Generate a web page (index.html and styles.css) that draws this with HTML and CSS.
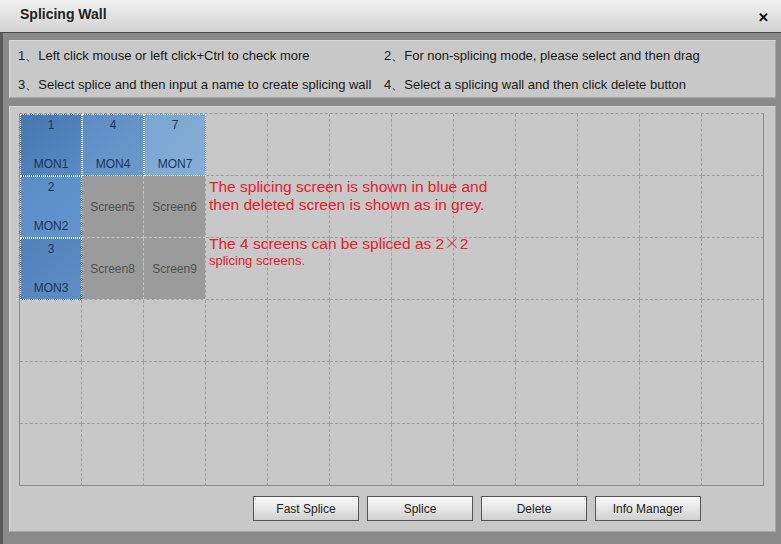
FILE: index.html
```html
<!DOCTYPE html>
<html>
<head>
  <meta charset="utf-8">
  <link rel="stylesheet" href="styles.css">
  <title>Splicing Wall</title>
</head>
<body>
  <div class="window">
    <div class="titlebar">
      <span class="title">Splicing Wall</span>
      <span class="close">&#x2715;</span>
    </div>

    <div class="content">
      <div class="tips">
        <div>1、Left click mouse or left click+Ctrl to check more</div>
        <div>2、For non-splicing mode, please select and then drag</div>
        <div>3、Select splice and then input a name to create splicing wall</div>
        <div>4、Select a splicing wall and then click delete button</div>
      </div>

      <div class="panel">
        <div class="wall" id="wall">
          <div class="note">
            <p>The splicing screen is shown in blue and<br>then deleted screen is shown as in grey.</p>
            <p>The 4 screens can be spliced as 2<span class="times">×</span>2</p>
            <p class="small">splicing screens.</p>
          </div>
        </div>

        <div class="buttons">
          <button>Fast Splice</button>
          <button>Splice</button>
          <button>Delete</button>
          <button>Info Manager</button>
        </div>
      </div>
    </div>
  </div>

  <script>
    // cells that belong to the wall, keyed by row-col
    var screens = {
      "0-0": { cls: "mon m1", num: "1", name: "MON1" },
      "0-1": { cls: "mon m4", num: "4", name: "MON4" },
      "0-2": { cls: "mon m7", num: "7", name: "MON7" },
      "1-0": { cls: "mon m2", num: "2", name: "MON2" },
      "2-0": { cls: "mon m3", num: "3", name: "MON3" },
      "1-1": { cls: "grey", name: "Screen5" },
      "1-2": { cls: "grey", name: "Screen6" },
      "2-1": { cls: "grey", name: "Screen8" },
      "2-2": { cls: "grey", name: "Screen9" }
    };

    var wall = document.getElementById("wall");
    for (var r = 0; r < 6; r++) {
      for (var c = 0; c < 12; c++) {
        var cell = document.createElement("div");
        cell.className = "cell";
        var s = screens[r + "-" + c];
        if (s) {
          cell.className += " " + s.cls;
          if (s.num) {
            cell.innerHTML = '<span class="num">' + s.num + '</span><span class="name">' + s.name + '</span>';
          } else {
            cell.innerHTML = '<span class="name">' + s.name + '</span>';
          }
        }
        wall.appendChild(cell);
      }
    }
  </script>
</body>
</html>
```

FILE: styles.css
```css
body {
  margin: 0;
  background-color: #8a8a8a;
  font-family: "Liberation Sans", Arial, sans-serif;
}

.window {
  width: 781px;
  height: 544px;
  box-sizing: border-box;
  border-left: 3px solid #5a5a5a;
  background-color: #8a8a8a;
}

.titlebar {
  height: 32px;
  margin-left: -3px;
  padding: 0 12px 0 20px;
  display: flex;
  align-items: center;
  justify-content: space-between;
  background: linear-gradient(#f2f2f2, #d2d2d2);
  border-bottom: 1px solid #4a4a4a;
}

.title {
  font-size: 14px;
  font-weight: bold;
  color: #222;
  padding-bottom: 4px;
}

.close {
  font-size: 13px;
  font-weight: bold;
  color: #000;
  padding-top: 2px;
}

.content {
  padding: 7px 5px 0 6px;
}

.tips {
  height: 58px;
  box-sizing: border-box;
  background-color: #c8c8c8;
  border: 1px solid #d6d6d6;
  border-right-color: #a8a8a8;
  border-bottom-color: #a8a8a8;
  display: grid;
  grid-template-columns: 366px 1fr;
  grid-template-rows: 29px 30px;
  align-items: center;
  padding-left: 8px;
  font-size: 13px;
  color: #1a1a1a;
}

.panel {
  margin-top: 8px;
  height: 426px;
  box-sizing: border-box;
  background-color: #c8c8c8;
  border: 1px solid #d6d6d6;
  border-right-color: #a8a8a8;
  border-bottom-color: #a8a8a8;
  padding: 6px 9px 0 9px;
}

.wall {
  position: relative;
  display: grid;
  grid-template-columns: repeat(12, 62px);
  grid-template-rows: repeat(6, 62px);
  border-left: 1px solid #8a8a8a;
  border-top: 1px dashed #9a9a9a;
  width: 744px;
}

.cell {
  box-sizing: border-box;
  border-right: 1px dashed #a0a0a0;
  border-bottom: 1px dashed #a0a0a0;
  display: flex;
  flex-direction: column;
  align-items: center;
  justify-content: center;
  font-size: 12px;
}

.wall .cell:nth-child(12n+13) {
  border-right: 1px solid #8a8a8a;
}

.wall .cell:nth-last-child(-n+12) {
  border-bottom: 1px solid #8a8a8a;
}

.mon {
  justify-content: space-between;
  padding: 3px 0 4px;
  color: #1d3557;
  border: 1px dotted #ffffff !important;
}

.m1 { background: linear-gradient(135deg, #4676b0, #5a8bc4); }
.m4 { background: linear-gradient(135deg, #5c8cc4, #6b9acb); }
.m7 { background: linear-gradient(135deg, #79a5d1, #86afd7); }
.m2 { background: linear-gradient(135deg, #5b8cc5, #6494cb); }
.m3 { background: linear-gradient(135deg, #5280ba, #5f8dc5); }

.grey {
  background-color: #9b9b9b;
  color: #505050;
  border-right-color: #c4c4c4;
  border-bottom-color: #c4c4c4;
}

.note {
  position: absolute;
  left: 189px;
  top: 64px;
  color: #e4202c;
  font-size: 15.5px;
  line-height: 18px;
}

.note p {
  margin: 0 0 19px;
}

.note .times {
  font-family: "Noto Sans CJK SC", sans-serif;
  font-weight: 300;
  line-height: 18px;
}

.note p.small {
  margin-top: -19px;
  font-size: 13px;
  line-height: 16px;
}

.buttons {
  display: flex;
  gap: 8px;
  margin-top: 10px;
  padding-left: 234px;
}

.buttons button {
  width: 106px;
  height: 25px;
  border: 1px solid #555;
  border-radius: 0;
  background: linear-gradient(#fbfbfb, #d0d0d0);
  font-family: "Liberation Sans", Arial, sans-serif;
  font-size: 12px;
  color: #222;
  padding: 0;
}
```
